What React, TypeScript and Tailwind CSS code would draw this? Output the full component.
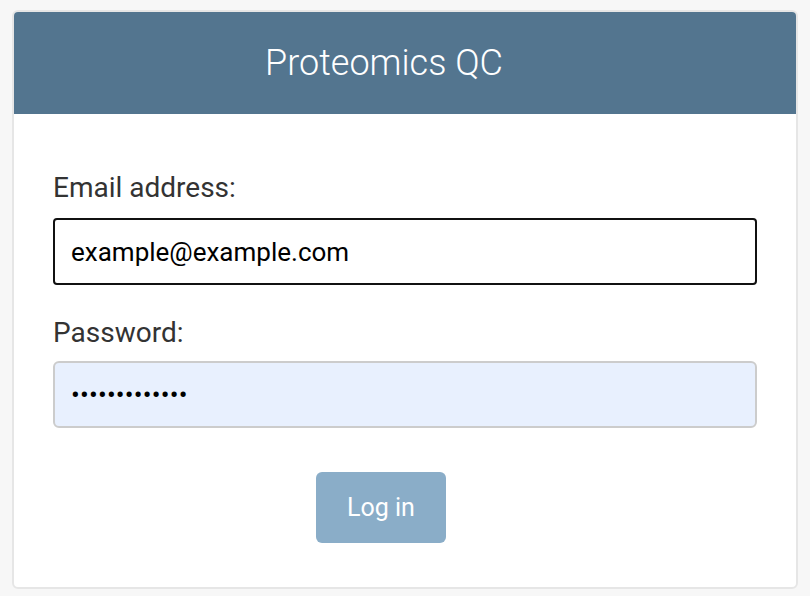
import React from "react";

export default function App() {
  return (
    <div className="min-h-[596px] w-full bg-[#f7f7f7] pt-[10px] pl-[12px] font-['Roboto','Liberation_Sans',sans-serif]">
      <div className="w-[786px] rounded-[6px] border-2 border-[#e6e6e6] bg-white overflow-hidden">
        {/* Header */}
        <div className="flex h-[102px] items-center justify-center bg-[#53758f] pr-[42px]">
          <h1 className="text-[36px] font-light text-white">Proteomics QC</h1>
        </div>

        {/* Form */}
        <form className="flex flex-col px-[39px] pt-[58px] pb-[44px]">
          <label className="mb-[14px] text-[28px] leading-[32px] text-[#333]">Email address:</label>
          <input
            type="text"
            defaultValue="example@example.com"
            className="h-[67px] rounded-[4px] border-2 border-[#111] px-[16px] text-[26px] text-black outline-none"
          />
          <label className="mt-[32px] mb-[12px] text-[28px] leading-[32px] text-[#333]">Password:</label>
          <input
            type="password"
            defaultValue="examplepass12"
            className="h-[67px] rounded-[6px] border-2 border-[#cccccc] bg-[#e8f0fe] px-[16px] text-[26px] tracking-[0.2px] text-black outline-none"
          />
          <div className="mt-[44px] flex justify-center pr-[48px]">
            <button
              type="button"
              className="h-[71px] w-[130px] rounded-[6px] bg-[#8aadc8] text-[25px] text-white"
            >
              Log in
            </button>
          </div>
        </form>
      </div>
    </div>
  );
}
